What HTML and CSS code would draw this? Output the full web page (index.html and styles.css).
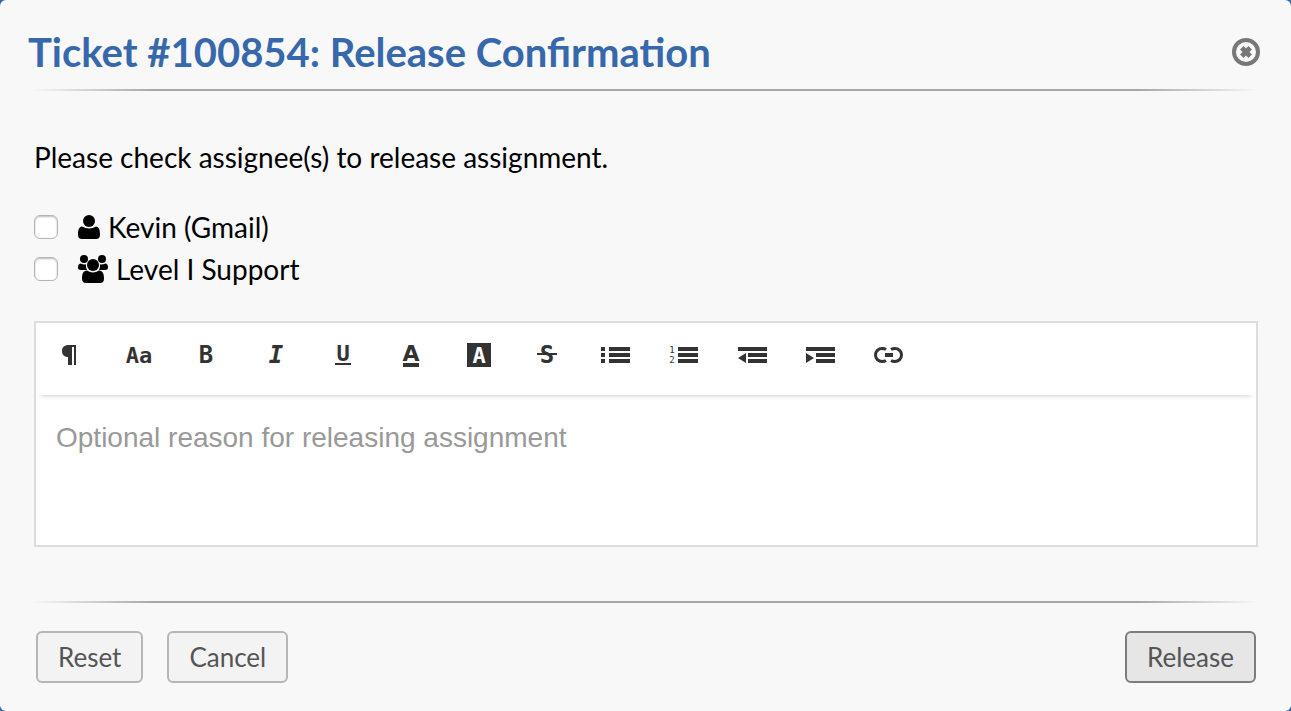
FILE: index.html
```html
<!DOCTYPE html>
<html lang="en">
<head>
<meta charset="utf-8">
<meta name="viewport" content="width=device-width, initial-scale=1">
<title>Ticket #100854: Release Confirmation</title>
<link rel="stylesheet" href="styles.css">
</head>
<body>
<main class="dialog">
  <header class="dialog-header">
    <h1 class="title">Ticket #100854: Release Confirmation</h1>
    <button class="close" type="button" aria-label="Close">
      <svg width="28" height="28" viewBox="0 0 28 28"><circle cx="14" cy="14" r="12" fill="none" stroke="#777" stroke-width="4"/><path d="M9.800 9.800l8.400 8.400M18.200 9.800l-8.400 8.400" stroke="#777" stroke-width="5"/></svg>
    </button>
  </header>
  <hr class="rule">
  <form class="form">
    <p class="intro">Please check assignee(s) to release assignment.</p>
    <div class="assignees">
      <label class="assignee">
        <input class="check" type="checkbox">
        <svg class="icon" width="22" height="26" viewBox="0 0 22 26"><circle cx="11" cy="7" r="6"/><path d="M4 12.500Q11 16.500 18 12.500C21 13 22 16 22 20.500Q22 25 18 25H4Q0 25 0 20.500C0 16 1 13 4 12.500Z"/></svg>
        <span>Kevin (Gmail)</span>
      </label>
      <label class="assignee">
        <input class="check" type="checkbox">
        <svg class="icon" width="30" height="28" viewBox="0 0 30 28"><circle cx="6" cy="4" r="4"/><circle cx="24" cy="4" r="4"/><circle cx="15" cy="10" r="6"/><path d="M2.500 8.600Q6 10 8 9.200Q7.500 12.500 9 15H3Q0 15 0 12.500Q0 9 2.500 8.600ZM27.500 8.600Q24 10 22 9.200Q22.500 12.500 21 15H27Q30 15 30 12.500Q30 9 27.500 8.600ZM9 15.500Q15 19.500 21 15.500C25 16 26 19 26 23.500Q26 28 22 28H8Q4 28 4 23.500C4 19 5 16 9 15.500Z"/></svg>
        <span>Level I Support</span>
      </label>
    </div>
    <div class="editor">
      <div class="toolbar" role="toolbar" aria-label="Formatting">
        <button class="tool" type="button" aria-label="Paragraph"><svg viewBox="0 0 68 64"><path d="M40 22V42H38V24H36V42H32V34C28 34 26 31.500 26 28S28 22 33 22Z"/></svg></button>
        <button class="tool" type="button" aria-label="Font size"><svg viewBox="0 0 68 64"><text x="35" y="40" font-size="22">Aa</text></svg></button>
        <button class="tool" type="button" aria-label="Bold"><svg viewBox="0 0 68 64"><text x="34" y="40" font-size="24">B</text></svg></button>
        <button class="tool" type="button" aria-label="Italic"><svg viewBox="0 0 68 64"><text x="36" y="40" font-size="24" font-style="italic">I</text></svg></button>
        <button class="tool" type="button" aria-label="Underline"><svg viewBox="0 0 68 64"><text x="35" y="38" font-size="22">U</text><path d="M27 40H43V42H27Z"/></svg></button>
        <button class="tool" type="button" aria-label="Text color"><svg viewBox="0 0 68 64"><text class="wide" x="35" y="38" font-size="22">A</text><path d="M27 40H43V44H27Z"/></svg></button>
        <button class="tool" type="button" aria-label="Highlight"><svg viewBox="0 0 68 64"><path d="M23 20H47V44H23Z"/><text class="knockout" x="35" y="40" font-size="22">A</text></svg></button>
        <button class="tool" type="button" aria-label="Strikethrough"><svg viewBox="0 0 68 64"><text x="35" y="40" font-size="24">S</text><path d="M25 30H45V32H25Z"/></svg></button>
        <button class="tool" type="button" aria-label="Bulleted list"><svg viewBox="0 0 68 64"><path d="M21 24h4v4h-4zM21 30h4v4h-4zM21 36h4v4h-4zM29 24h21v4H29zM29 30h21v4H29zM29 36h21v4H29z"/></svg></button>
        <button class="tool" type="button" aria-label="Numbered list"><svg viewBox="0 0 68 64"><path d="M30 24h20v4H30zM30 30h20v4H30zM30 36h20v4H30z"/><text class="digit" x="24" y="30">1</text><text class="digit" x="24" y="40">2</text></svg></button>
        <button class="tool" type="button" aria-label="Outdent"><svg viewBox="0 0 68 64"><path d="M22 24h29v4H22zM32 30h19v4H32zM32 36h19v4H32zM30 30v10l-8-5z"/></svg></button>
        <button class="tool" type="button" aria-label="Indent"><svg viewBox="0 0 68 64"><path d="M22 24h29v4H22zM32 30h19v4H32zM32 36h19v4H32zM22 30v10l8-5z"/></svg></button>
        <button class="tool" type="button" aria-label="Link"><svg viewBox="0 0 68 64"><path d="M34 26.500Q32.500 25.500 30 25.500A6.500 6.500 0 0 0 30 38.500Q32.500 38.500 34 37.500M39 26.500Q40.500 25.500 43 25.500A6.500 6.500 0 0 1 43 38.500Q40.500 38.500 39 37.500" fill="none" stroke="#333" stroke-width="3"/><path d="M33 30h8v4h-8z"/></svg></button>
      </div>
      <textarea class="reason" aria-label="Reason" placeholder="Optional reason for releasing assignment"></textarea>
    </div>
    <hr class="rule">
    <footer class="actions">
      <button class="button" type="reset">Reset</button>
      <button class="button" type="button">Cancel</button>
      <button class="button primary" type="submit">Release</button>
    </footer>
  </form>
</main>
</body>
</html>
```
FILE: styles.css
```css
* { box-sizing: border-box; }
body {
  margin: 0;
  background: #3465ad;
  font: 28px/34px Lato, sans-serif;
  color: #000;
}
.dialog {
  min-height: 100vh;
  padding: 28px 32px;
  background: #f8f8f8;
  border-radius: 6px;
}
.dialog-header {
  display: flex;
  align-items: center;
  justify-content: space-between;
  height: 48px;
  margin: 0 -1px 0 -4px;
}
.title {
  margin: 0;
  font-size: 40px;
  line-height: 48px;
  font-weight: 700;
  color: #3768ac;
}
.close {
  width: 28px;
  height: 28px;
  padding: 0;
  border: 0;
  background: none;
}
.close svg { display: block; }
.rule {
  height: 2px;
  margin: 13px 0 0;
  border: 0;
  background: linear-gradient(to right, transparent, #a6a6a6 10%, #a6a6a6 90%, transparent);
}
.intro { margin: 49px 2px 36px; }
.assignees {
  display: grid;
  gap: 8px;
  margin: 0 2px;
}
.assignee {
  display: flex;
  align-items: center;
}
.check {
  appearance: none;
  width: 24px;
  height: 24px;
  margin: 0 20px 0 0;
  background: #fff;
  border: 1px solid #b4b4b4;
  border-radius: 6px;
  box-shadow: inset 0 1px 2px #bbb;
}
.icon { margin-right: 8px; }
.editor {
  margin: 35px 1px 54px 2px;
  border: 2px solid #ddd;
  background: #fff;
}
.toolbar {
  display: flex;
  flex-wrap: wrap;
  min-height: 72px;
  box-shadow: 0 5px 5px -5px #bbb;
}
.tool {
  width: 68px;
  height: 64px;
  padding: 0;
  border: 0;
  background: none;
}
.tool svg {
  display: block;
  width: 68px;
  height: 64px;
  fill: #333;
  font-family: "DejaVu Sans Mono", monospace;
  font-weight: 700;
  text-anchor: middle;
}
.tool .wide { font-family: "DejaVu Sans", sans-serif; }
.tool .knockout { fill: #fff; }
.tool .digit { font-size: 9px; font-weight: 400; }
.reason {
  display: block;
  width: 100%;
  height: 150px;
  padding: 26px 20px;
  border: 0;
  resize: none;
  outline: 0;
  background: transparent;
  font: 28px/34px "Liberation Sans", Arial, sans-serif;
}
.reason::placeholder { color: #999; }
.actions {
  display: flex;
  gap: 24px;
  padding: 28px 3px 0 4px;
}
.button {
  height: 52px;
  padding: 0 20px;
  border: 2px solid #b6b6b6;
  border-radius: 6px;
  background: #f3f3f3;
  color: #555;
  font: inherit;
  font-size: 26px;
}
.primary {
  margin-left: auto;
  border-color: #7d7d7d;
  background: #e6e6e6;
}
```
